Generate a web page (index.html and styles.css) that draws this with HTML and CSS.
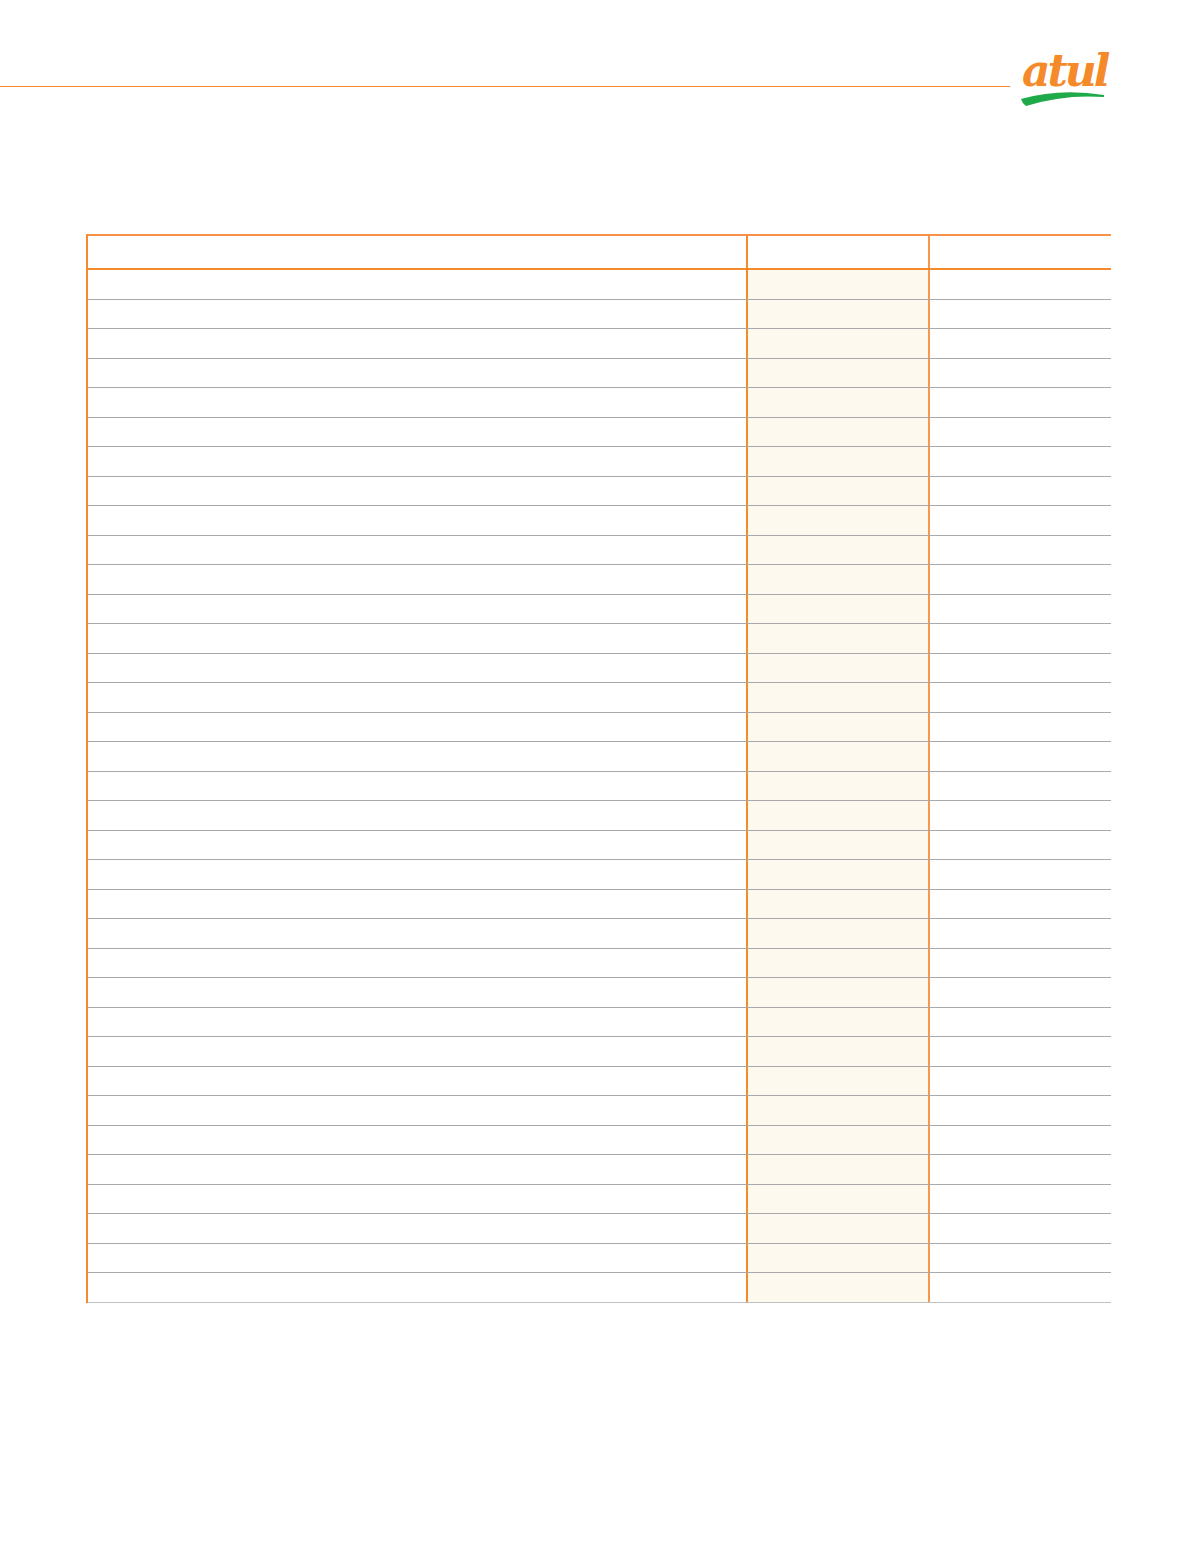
FILE: index.html
```html
<!DOCTYPE html>
<html lang="en">
<head>
<meta charset="utf-8">
<title>Atul</title>
<link rel="stylesheet" href="styles.css">
</head>
<body>
<header class="top">
  <div class="rule"></div>
  <div class="logo">
    <span class="logo-text">atul</span>
    <svg class="swoosh" width="86" height="18" viewBox="0 0 86 18"><path d="M1,10 Q40,-1 84,6 L84,8 Q44,5 6,17 Q2,14 1,10 Z" fill="#1faa4a"/></svg>
  </div>
</header>
<div class="sheet" id="sheet">
  <div class="row head"><div class="c c1"></div><div class="c c2"></div><div class="c c3"></div></div>
</div>
<script>
  var s = document.getElementById('sheet');
  for (var i = 0; i < 35; i++) {
    var r = document.createElement('div');
    r.className = 'row' + (i === 34 ? ' last' : '');
    r.innerHTML = '<div class="c c1"></div><div class="c c2"></div><div class="c c3"></div>';
    s.appendChild(r);
  }
</script>
</body>
</html>
```
FILE: styles.css
```css
html, body { margin: 0; padding: 0; background: #fff; font-family: "Liberation Sans", Arial, sans-serif; }
.top { display: flex; align-items: flex-start; height: 120px; }
.rule { width: 1010px; height: 1px; background: #f58a2b; margin-top: 86px; }
.logo { position: relative; margin-left: 10px; margin-top: 36px; width: 90px; height: 72px; }
.logo-text { display: block; font-family: "DejaVu Serif", serif; font-style: italic; font-weight: bold; font-size: 44px; line-height: 56px; margin-top: 7px; color: #f58a2b; letter-spacing: -3px; padding-left: 2px; }
.swoosh { position: absolute; left: 0; top: 53px; }
.sheet { margin-top: 114px; margin-left: 86px; width: 1023px; border-top: 2px solid #f6924a; border-left: 2px solid #f58a2b; }
.row { display: grid; grid-template-columns: 658px 182px 183px; height: 29.51px; box-sizing: border-box; border-bottom: 1px solid #a9a9a9; }
.row.head { height: 34px; border-bottom: 2px solid #f58a2b; }
.row.last { border-bottom-color: #c0c0c0; }
.c2 { background: #fef9ee; border-left: 2px solid #f58a2b; }
.c3 { border-left: 2px solid #f6964f; }
.head .c2 { background: #fff; }
```
